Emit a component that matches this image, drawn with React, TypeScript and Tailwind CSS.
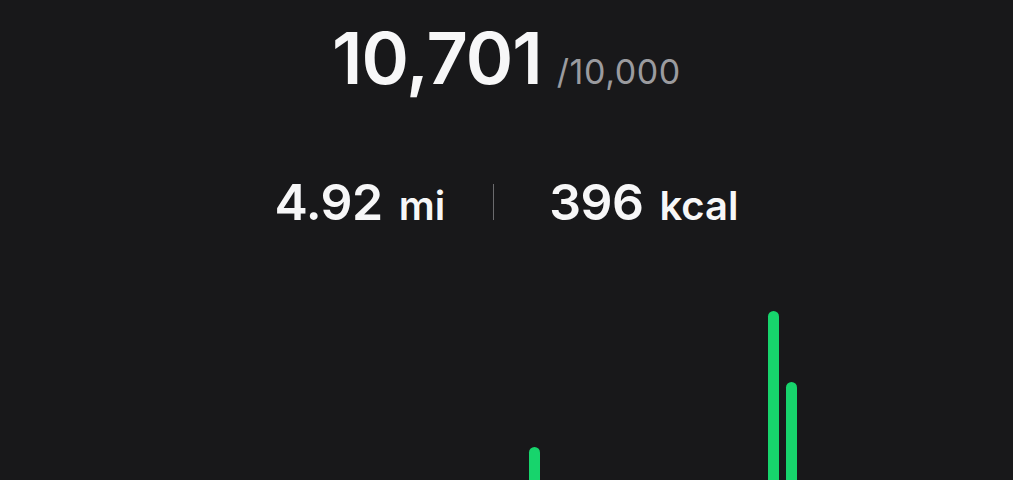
const hourly: number[] = Array.from({ length: 48 }, () => 0);
hourly[25] = 93;
hourly[38] = 229;
hourly[39] = 158;

function StepsHeader() {
  return (
    <div className="flex items-baseline justify-center pt-[22px]">
      <span className="text-[72px] font-semibold leading-none tracking-[-1px] text-[#f7f7f8]">10,701</span>
      <span className="ml-[15px] align-[3px] text-[34px] leading-none tracking-[0.6px] text-[#9b9b9f]">/10,000</span>
    </div>
  );
}

function Stat({ value, unit }: { value: string; unit: string }) {
  return (
    <div className="flex items-baseline gap-[16px] text-[#f7f7f8]">
      <span className="text-[50px] font-semibold leading-none tracking-[-0.5px]">{value}</span>
      <span className="text-[40px] font-semibold leading-none">{unit}</span>
    </div>
  );
}

function HourlyChart() {
  return (
    <div className="mx-auto mt-[73px] grid h-[240px] w-[883px] grid-cols-[repeat(48,minmax(0,1fr))] items-end">
      {hourly.map((h, i) => (
        <div key={i} className="flex justify-center">
          {h > 0 ? <div className="w-[11px] rounded-full bg-[#17d46c]" style={{ height: h }} /> : null}
        </div>
      ))}
    </div>
  );
}

export default function App() {
  return (
    <div className="h-[480px] w-full overflow-hidden bg-[#18181a]" style={{ fontFamily: "Inter, 'Noto Sans', sans-serif" }}>
      <StepsHeader />
      <div className="mt-[83px] flex items-center justify-center">
        <Stat value="4.92" unit="mi" />
        <div className="ml-[48px] mr-[55px] h-[36px] w-px bg-[#6b6b6e]" />
        <Stat value="396" unit="kcal" />
      </div>
      <HourlyChart />
    </div>
  );
}
